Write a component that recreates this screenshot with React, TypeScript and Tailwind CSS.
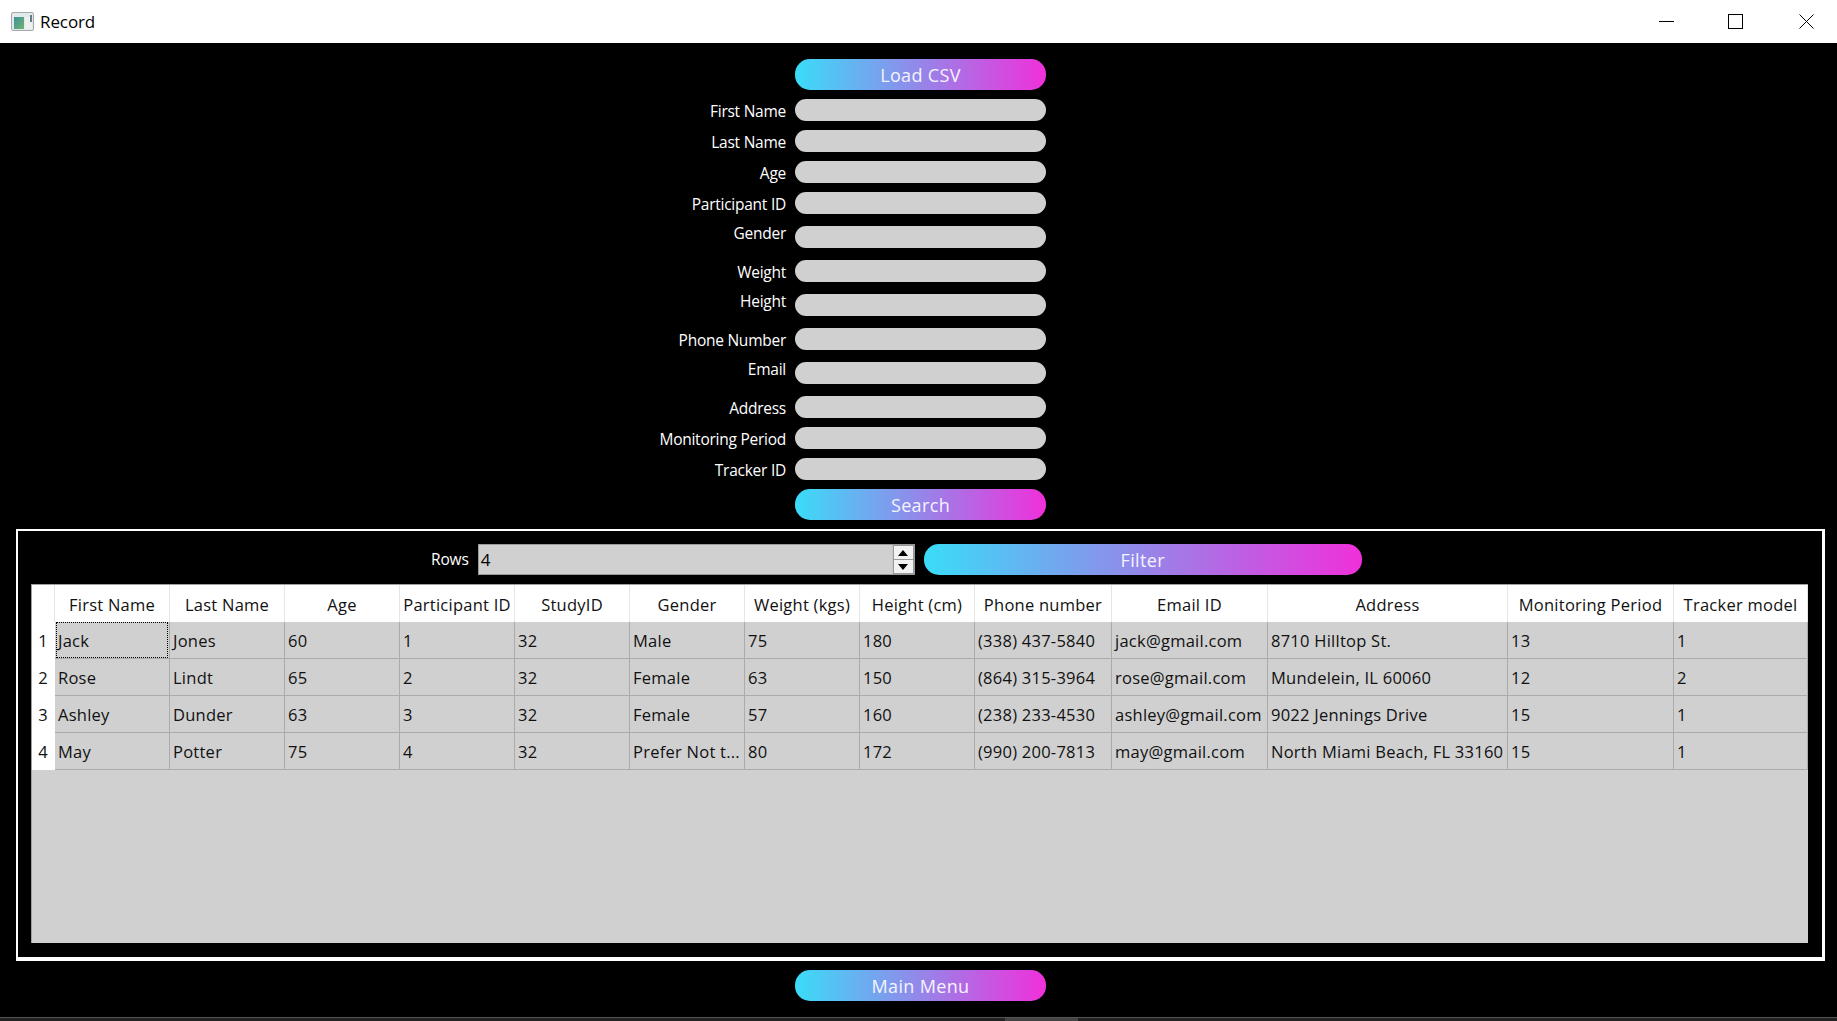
const font = "font-['Open_Sans','Noto_Sans',sans-serif]";

const fields = [
  { name: "First Name", row: "mt-[9px]", label: "pt-1" },
  { name: "Last Name", row: "mt-[9px]", label: "pt-1" },
  { name: "Age", row: "mt-[9px]", label: "pt-1" },
  { name: "Participant ID", row: "mt-[9px]", label: "pt-1" },
  { name: "Gender", row: "mt-3", label: "pb-[7px]" },
  { name: "Weight", row: "mt-3", label: "pt-1" },
  { name: "Height", row: "mt-3", label: "pb-[7px]" },
  { name: "Phone Number", row: "mt-3", label: "pt-1" },
  { name: "Email", row: "mt-3", label: "pb-[7px]" },
  { name: "Address", row: "mt-3", label: "pt-1" },
  { name: "Monitoring Period", row: "mt-[9px]", label: "pt-1" },
  { name: "Tracker ID", row: "mt-[9px]", label: "pt-1" },
];

const columns = [
  { name: "First Name", w: "w-[115px]" },
  { name: "Last Name", w: "w-[115px]" },
  { name: "Age", w: "w-[115px]" },
  { name: "Participant ID", w: "w-[115px]" },
  { name: "StudyID", w: "w-[115px]" },
  { name: "Gender", w: "w-[115px]" },
  { name: "Weight (kgs)", w: "w-[115px]" },
  { name: "Height (cm)", w: "w-[115px]" },
  { name: "Phone number", w: "w-[137px]" },
  { name: "Email ID", w: "w-[156px]" },
  { name: "Address", w: "w-[240px]" },
  { name: "Monitoring Period", w: "w-[166px]" },
  { name: "Tracker model", w: "w-[134px]" },
];

const rows = [
  ["Jack", "Jones", "60", "1", "32", "Male", "75", "180", "(338) 437-5840", "jack@gmail.com", "8710 Hilltop St.", "13", "1"],
  ["Rose", "Lindt", "65", "2", "32", "Female", "63", "150", "(864) 315-3964", "rose@gmail.com", "Mundelein, IL 60060", "12", "2"],
  ["Ashley", "Dunder", "63", "3", "32", "Female", "57", "160", "(238) 233-4530", "ashley@gmail.com", "9022 Jennings Drive", "15", "1"],
  ["May", "Potter", "75", "4", "32", "Prefer Not t...", "80", "172", "(990) 200-7813", "may@gmail.com", "North Miami Beach, FL 33160", "15", "1"],
];

function GradientButton({ text, width = "w-[251px]" }: { text: string; width?: string }) {
  return (
    <button className={`${width} h-[31px] rounded-[15px] bg-[linear-gradient(to_right,#3adcf8,#f030da)] pt-px text-[18px] leading-[30px] tracking-[0.35px] text-[#f4f4ff]`}>
      {text}
    </button>
  );
}

function WindowIcon() {
  return (
    <svg width="24" height="20" viewBox="0 0 24 20" className="mr-[5px]">
      <defs>
        <linearGradient id="pane" x1="0" y1="0" x2="1" y2="1">
          <stop offset="0" stopColor="#3f8f9c" />
          <stop offset="1" stopColor="#6fb56e" />
        </linearGradient>
      </defs>
      <rect x="0.5" y="0.5" width="22" height="18" rx="1.5" fill="#e3e8ea" stroke="#a3a9ad" />
      <rect x="3" y="5" width="10" height="12" fill="url(#pane)" />
      <rect x="14" y="5" width="7" height="12" fill="#eef0f0" />
      <rect x="19" y="3" width="2" height="7" fill="#5d7f86" />
    </svg>
  );
}

function TitleBar() {
  return (
    <div className="flex h-[43px] shrink-0 items-center bg-white pl-[11px] text-black">
      <WindowIcon />
      <span className="text-[17px] tracking-[-0.1px]">Record</span>
      <div className="ml-auto flex items-center pr-[23px]">
        <svg width="15" height="15" viewBox="0 0 15 15" className="mr-[54px]">
          <path d="M0 7.5h15" stroke="#000" strokeWidth="1" />
        </svg>
        <svg width="15" height="15" viewBox="0 0 15 15" className="mr-[56px]">
          <rect x="0.5" y="0.5" width="14" height="14" fill="none" stroke="#000" strokeWidth="1" />
        </svg>
        <svg width="15" height="15" viewBox="0 0 15 15">
          <path d="M0.5 0.5l14 14M14.5 0.5l-14 14" stroke="#000" strokeWidth="1" />
        </svg>
      </div>
    </div>
  );
}

function SearchForm() {
  return (
    <div className="grid grid-cols-[786px_251px] gap-x-[9px] pt-4">
      <div />
      <GradientButton text="Load CSV" />
      {fields.map((f) => (
        <div key={f.name} className={`col-span-2 grid grid-cols-[786px_251px] gap-x-[9px] ${f.row}`}>
          <label className={`flex h-[22px] items-center justify-end text-[15.5px] tracking-[-0.25px] text-white ${f.label}`}>
            {f.name}
          </label>
          <input className="h-[22px] rounded-[11px] bg-[#d0d0d0] outline-none" />
        </div>
      ))}
      <div />
      <div className="mt-[9px]">
        <GradientButton text="Search" />
      </div>
    </div>
  );
}

function RowsSpinner() {
  return (
    <div className="flex items-center">
      <span className="mr-[9px] text-[15.5px] tracking-[-0.15px] text-white">Rows</span>
      <div className="flex h-[31px] w-[437px] items-center justify-between border border-[#9a9a9a] bg-[#d0d0d0] pl-[2px] text-[17px] text-black">
        <span>4</span>
        <div className="flex h-full w-[22px] flex-col border-l border-[#c8c8c8] bg-[#f2f2f2]">
          <div className="flex flex-1 items-center justify-center border border-[#9a9a9a]">
            <svg width="10" height="6" viewBox="0 0 10 6"><path d="M5 0l5 6H0z" fill="#000" /></svg>
          </div>
          <div className="flex flex-1 items-center justify-center border border-t-0 border-[#9a9a9a]">
            <svg width="10" height="6" viewBox="0 0 10 6"><path d="M0 0h10L5 6z" fill="#000" /></svg>
          </div>
        </div>
      </div>
    </div>
  );
}

function RecordsTable() {
  return (
    <div className="h-[359px] w-[1777px] border-t border-l border-[#a0a0a0] bg-[#d0d0d0]">
      <table className="table-fixed border-separate border-spacing-0 text-[16.5px] tracking-[0.25px] text-[#111]">
        <thead>
          <tr className="h-[37px] bg-white font-normal">
            <th className="w-[23px] border-r border-[#e6e6e6] font-normal" />
            {columns.map((c) => (
              <th key={c.name} className={`${c.w} overflow-hidden border-r border-[#e6e6e6] px-0 pt-[3px] pb-0 text-center font-normal whitespace-nowrap`}>
                {c.name}
              </th>
            ))}
          </tr>
        </thead>
        <tbody>
          {rows.map((r, i) => (
            <tr key={i} className="h-[37px]">
              <td className="bg-white pt-[2px] pr-[7px] text-right">{i + 1}</td>
              {r.map((cell, j) => (
                <td key={j} className="relative overflow-hidden border-r border-b border-[#ababab] pt-[2px] pl-[3px] whitespace-nowrap">
                  {i === 0 && j === 0 && (
                    <span className="absolute inset-x-[1px] inset-y-[0px] border border-dotted border-black" />
                  )}
                  {cell}
                </td>
              ))}
            </tr>
          ))}
        </tbody>
      </table>
    </div>
  );
}

export default function App() {
  return (
    <div className={`flex h-screen w-full flex-col overflow-hidden bg-black ${font}`}>
      <TitleBar />
      <SearchForm />
      <div className="mt-[9px] mr-3 ml-4 border-2 border-r-[3px] border-b-[4px] border-white pt-[13px] pl-[13px]">
        <div className="flex h-[31px] items-center pl-[400px]">
          <RowsSpinner />
          <div className="ml-[9px]">
            <GradientButton text="Filter" width="w-[438px]" />
          </div>
        </div>
        <div className="mt-[9px] mb-[14px]">
          <RecordsTable />
        </div>
      </div>
      <div className="mt-[9px] pl-[795px]">
        <GradientButton text="Main Menu" />
      </div>
      <div className="mt-4 flex h-[4px] border-t border-[#555] bg-[#222]">
        <div className="ml-[1005px] w-[73px] bg-[#444]" />
      </div>
    </div>
  );
}
